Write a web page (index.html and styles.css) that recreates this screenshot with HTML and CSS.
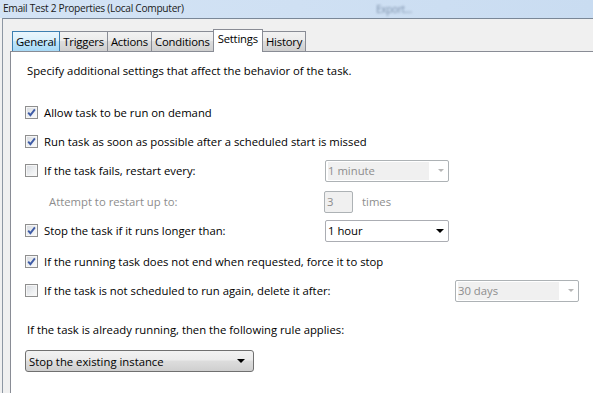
FILE: index.html
```html
<!DOCTYPE html>
<html lang="en">
<head>
    <meta charset="UTF-8">
    <title>Email Test 2 Properties (Local Computer)</title>
    <link rel="stylesheet" href="styles.css">
</head>
<body>
    <div class="titlebar">
        <span class="title">Email Test 2 Properties (Local Computer)</span>
        <span class="ghost">Export...</span>
    </div>
    <div class="frame">
        <div class="tabs">
            <div class="tab hot">General</div>
            <div class="tab">Triggers</div>
            <div class="tab">Actions</div>
            <div class="tab">Conditions</div>
            <div class="tab active">Settings</div>
            <div class="tab">History</div>
        </div>
        <div class="panel">
            <p class="intro">Specify additional settings that affect the behavior of the task.</p>

            <div class="rows">
                <div class="row">
                    <span class="check on"><svg viewBox="0 0 11 11"><path d="M2.2 5.6 L4.4 8.2 L8.9 2.3"/></svg></span>
                    <span class="label">Allow task to be run on demand</span>
                </div>
                <div class="row">
                    <span class="check on"><svg viewBox="0 0 11 11"><path d="M2.2 5.6 L4.4 8.2 L8.9 2.3"/></svg></span>
                    <span class="label">Run task as soon as possible after a scheduled start is missed</span>
                </div>
                <div class="row">
                    <span class="check"></span>
                    <span class="label fixed">If the task fails, restart every:</span>
                    <div class="select disabled"><span class="value">1 minute</span><span class="arrow"></span></div>
                </div>
                <div class="row gap">
                    <span class="label sub">Attempt to restart up to:</span>
                    <div class="spin disabled">3</div>
                    <span class="label muted">times</span>
                </div>
                <div class="row">
                    <span class="check on"><svg viewBox="0 0 11 11"><path d="M2.2 5.6 L4.4 8.2 L8.9 2.3"/></svg></span>
                    <span class="label fixed">Stop the task if it runs longer than:</span>
                    <div class="select"><span class="value">1 hour</span><span class="arrow"></span></div>
                </div>
                <div class="row gap">
                    <span class="check on"><svg viewBox="0 0 11 11"><path d="M2.2 5.6 L4.4 8.2 L8.9 2.3"/></svg></span>
                    <span class="label">If the running task does not end when requested, force it to stop</span>
                </div>
                <div class="row">
                    <span class="check"></span>
                    <span class="label wide">If the task is not scheduled to run again, delete it after:</span>
                    <div class="select disabled"><span class="value">30 days</span><span class="arrow"></span></div>
                </div>
            </div>

            <p class="rule">If the task is already running, then the following rule applies:</p>
            <div class="combo"><span>Stop the existing instance</span><span class="arrow"></span></div>
        </div>
    </div>
</body>
</html>
```

FILE: styles.css
```css
body {
    margin: 0;
    width: 593px;
    height: 393px;
    overflow: hidden;
    font-family: "Open Sans", "Noto Sans", sans-serif;
    font-size: 11.3px;
    color: #000;
    background: #f0f0f0;
}
.titlebar {
    position: relative;
    height: 18px;
    padding-left: 3px;
    background: linear-gradient(90deg, #d3e3f5 0%, #cfe0f3 50%, #c9dcf1 100%);
    font-size: 10.2px;
    letter-spacing: -0.3px;
    line-height: 17px;
    color: #1a1a1a;
    white-space: nowrap;
    overflow: hidden;
}
.ghost {
    position: absolute;
    left: 376px;
    top: 3px;
    line-height: 12px;
    color: #7f93ad;
    filter: blur(1.3px);
    font-size: 10px;
}
.frame {
    margin-left: 2px;
    border-top: 1px solid #7a8797;
    border-left: 1px solid #8d97a3;
    padding: 10px 0 0 7px;
    height: 364px;
}
.tabs {
    display: flex;
    align-items: flex-end;
    margin-left: 2px;
    height: 22px;
}
.tab {
    height: 19px;
    line-height: 19px;
    padding: 0 3px;
    margin-right: -1px;
    border: 1px solid #898c95;
    border-bottom: none;
    background: linear-gradient(#f2f2f2 0%, #ebebeb 45%, #dddddd 50%, #cfcfcf 100%);
    white-space: nowrap;
    letter-spacing: -0.2px;
}
.tab.hot {
    border-color: #3c7fb1;
    background: linear-gradient(#eaf6fd 0%, #d9f0fc 45%, #bee6fd 50%, #a7d9f5 100%);
    position: relative;
}
.tab.active {
    height: 22px;
    line-height: 17px;
    padding: 0 4px;
    background: #fff;
    position: relative;
    z-index: 1;
    margin-bottom: -1px;
}
.panel {
    background: #fff;
    border: 1px solid #898c95;
    border-right: none;
    border-bottom: none;
    height: 350px;
    padding-left: 16px;
}
.intro {
    margin: 0;
    padding-top: 11px;
    line-height: 15px;
}
.rows {
    margin-top: 20px;
    margin-left: -2px;
}
.row {
    display: flex;
    align-items: center;
    height: 29px;
}
.row.gap {
    margin-top: 2px;
}
.check {
    width: 11px;
    height: 11px;
    flex: none;
    border: 1px solid #8f8f8f;
    background: linear-gradient(135deg, #d6d9de 0%, #eef0f2 60%, #fbfbfb 100%);
    box-shadow: inset 0 0 0 1px #f6f6f6;
    margin-right: 6px;
}
.check svg {
    display: block;
    width: 11px;
    height: 11px;
}
.check path {
    fill: none;
    stroke: #3f5ca6;
    stroke-width: 1.9;
}
.label {
    white-space: nowrap;
}
.label.fixed {
    width: 281px;
}
.label.wide {
    width: 411px;
}
.label.sub {
    color: #8d8d8d;
    padding-left: 24px;
    width: 275px;
}
.label.muted {
    color: #8d8d8d;
    margin-left: 9px;
}
.select {
    box-sizing: border-box;
    width: 124px;
    height: 22px;
    border: 1px solid #abadb3;
    border-radius: 2px;
    background: #fff;
    display: flex;
    align-items: center;
    padding: 0 4px 0 2px;
}
.select .value {
    flex: 1;
    line-height: 18px;
}
.select.disabled {
    border-color: #adb2b5;
    color: #8d8d8d;
}
.select.disabled .value {
    background: #f0f0f0;
    margin-right: 9px;
}
.arrow {
    width: 0;
    height: 0;
    border-left: 4px solid transparent;
    border-right: 4px solid transparent;
    border-top: 4px solid #000;
}
.disabled .arrow {
    border-top-color: #b6b6b6;
    border-left-width: 3.5px;
    border-right-width: 3.5px;
    border-top-width: 3px;
}
.spin {
    box-sizing: border-box;
    width: 29px;
    height: 22px;
    border: 1px solid #adb2b5;
    border-radius: 2px;
    background: #f0f0f0;
    color: #8d8d8d;
    padding-left: 2px;
    line-height: 19px;
}
.rule {
    margin: 0;
    padding-top: 17px;
    line-height: 15px;
}
.combo {
    box-sizing: border-box;
    width: 229px;
    height: 22px;
    margin-top: 13px;
    margin-left: -2px;
    border: 1px solid #707070;
    border-radius: 3px;
    background: linear-gradient(#f2f2f2 0%, #ebebeb 45%, #dddddd 50%, #cfcfcf 100%);
    display: flex;
    align-items: center;
    justify-content: space-between;
    padding: 0 8px 0 3px;
}
```
